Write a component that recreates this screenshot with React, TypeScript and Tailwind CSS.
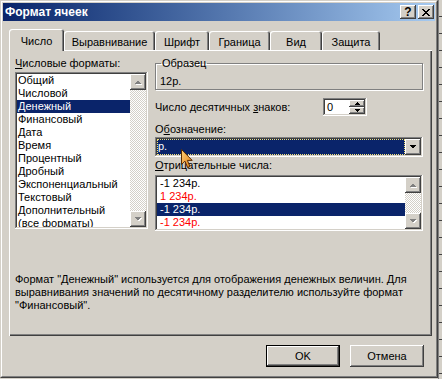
import React from 'react';

const raised =
  'shadow-[inset_-1px_-1px_#404040,inset_1px_1px_#fff,inset_-2px_-2px_#808080,inset_2px_2px_#d4d0c8]';
const sunken =
  'shadow-[inset_-1px_-1px_#fff,inset_1px_1px_#808080,inset_-2px_-2px_#d4d0c8,inset_2px_2px_#404040]';
const checker =
  'bg-[repeating-conic-gradient(#fff_0_25%,#d4d0c8_0_50%)] bg-[length:2px_2px]';

const Arrow: React.FC<{ dir: 'up' | 'down'; disabled?: boolean }> = ({ dir, disabled }) => {
  const pts = dir === 'up' ? '0,4 3.5,0.5 7,4' : '0,0 7,0 3.5,3.5';
  return (
    <svg width="8" height="5" viewBox="0 0 8 5" shapeRendering="crispEdges">
      {disabled && <polygon points={pts} fill="#fff" transform="translate(1,1)" />}
      <polygon points={pts} fill={disabled ? '#808080' : '#000'} />
    </svg>
  );
};

const ScrollBtn: React.FC<{ dir: 'up' | 'down'; disabled?: boolean }> = ({ dir, disabled }) => (
  <div className={`w-[16px] h-[16px] flex items-center justify-center bg-[#d4d0c8] ${raised}`}>
    <Arrow dir={dir} disabled={disabled} />
  </div>
);

const Scrollbar: React.FC = () => (
  <div className="w-[16px] h-full flex flex-col shrink-0">
    <ScrollBtn dir="up" disabled />
    <div className={`flex-1 ${checker}`}></div>
    <ScrollBtn dir="down" disabled />
  </div>
);

const FORMATS = [
  'Общий',
  'Числовой',
  'Денежный',
  'Финансовый',
  'Дата',
  'Время',
  'Процентный',
  'Дробный',
  'Экспоненциальный',
  'Текстовый',
  'Дополнительный',
  '(все форматы)',
];

const NEGATIVES = [
  { text: '-1 234р.', red: false },
  { text: '1 234р.', red: true },
  { text: '-1 234р.', red: false, selected: true },
  { text: '-1 234р.', red: true },
];

const TABS = [
  { label: 'Выравнивание', w: 'w-[91px]' },
  { label: 'Шрифт', w: 'w-[54px]' },
  { label: 'Граница', w: 'w-[61px]' },
  { label: 'Вид', w: 'w-[52px]' },
  { label: 'Защита', w: 'w-[58px]' },
];

const Cursor: React.FC = () => (
  <svg width="13" height="21" viewBox="0 0 13 21" className="absolute left-[26px] top-[12px] z-20">
    <defs>
      <linearGradient id="cur" x1="0" y1="0" x2="1" y2="1">
        <stop offset="0" stopColor="#ffd27a" />
        <stop offset="1" stopColor="#e07a10" />
      </linearGradient>
    </defs>
    <path
      d="M0.5 0.5 L0.5 15.5 L4 12.2 L6.6 18.5 L9 17.5 L6.4 11.4 L11.2 11.4 Z"
      fill="url(#cur)"
      stroke="#5a2c00"
      strokeWidth="1"
      strokeLinejoin="round"
    />
  </svg>
);

export default function App() {
  return (
    <div className="w-[442px] h-[379px] flex bg-[#d4d0c8] font-['Liberation_Sans',Arial,sans-serif] text-[11px] leading-[13px] text-black overflow-hidden">
      <div className="w-[438px] h-[378px] border border-t-[#d4d0c8] border-l-[#d4d0c8] border-r-[#404040] border-b-[#404040] shrink-0">
        <div className="w-full h-full border border-t-white border-l-white border-r-[#808080] border-b-[#808080] p-px flex flex-col">
          {/* Title bar */}
          <div className="h-[18px] bg-gradient-to-r from-[#0a246a] to-[#a6caf0] flex items-center justify-between pl-[2px] pr-[1px]">
            <span className="text-white font-bold text-[12px]">Формат ячеек</span>
            <div className="flex gap-[2px]">
              <div className={`w-[16px] h-[14px] bg-[#d4d0c8] flex items-center justify-center font-bold text-[12px] leading-none ${raised}`}>
                ?
              </div>
              <div className={`w-[16px] h-[14px] bg-[#d4d0c8] flex items-center justify-center ${raised}`}>
                <svg width="8" height="7" viewBox="0 0 8 7" shapeRendering="crispEdges">
                  <path d="M0 0h2v1H0zM6 0h2v1H6zM1 1h2v1H1zM5 1h2v1H5zM2 2h4v1H2zM3 3h2v1H3zM2 4h4v1H2zM1 5h2v1H1zM5 5h2v1H5zM0 6h2v1H0zM6 6h2v1H6z" fill="#000" />
                </svg>
              </div>
            </div>
          </div>

          {/* Tabs */}
          <div className="flex items-end h-[21px] mt-[8px] ml-[6px]">
            <div className="relative z-10 w-[55px] h-[22px] -mb-px bg-[#d4d0c8] rounded-t-[3px] shadow-[inset_1px_1px_#fff,inset_-1px_0_#404040,inset_-2px_0_#808080] flex justify-center pt-[6px]">
              Число
            </div>
            {TABS.map((t) => (
              <div
                key={t.label}
                className={`${t.w} h-[19px] bg-[#d4d0c8] rounded-t-[3px] shadow-[inset_1px_1px_#fff,inset_-1px_0_#404040,inset_-2px_0_#808080] flex justify-center pt-[5px]`}
              >
                {t.label}
              </div>
            ))}
          </div>

          {/* Panel */}
          <div className="ml-[6px] w-[423px] h-[286px] shadow-[inset_1px_1px_#fff,inset_-1px_-1px_#404040,inset_-2px_-2px_#808080] pl-[6px] pt-[7px] flex flex-col">
            <div className="flex gap-[7px]">
              {/* Left column */}
              <div className="w-[133px] flex flex-col">
                <div>
                  <span className="underline">Ч</span>исловые форматы:
                </div>
                <div className={`mt-[2px] h-[157px] bg-white p-[2px] flex ${sunken}`}>
                  <div className="flex-1 overflow-hidden">
                    {FORMATS.map((f) => (
                      <div
                        key={f}
                        className={`h-[13px] pl-px whitespace-nowrap ${f === 'Денежный' ? 'bg-[#0a246a] text-white' : ''}`}
                      >
                        {f}
                      </div>
                    ))}
                  </div>
                  <Scrollbar />
                </div>
              </div>

              {/* Right column */}
              <div className="w-[268px] flex flex-col">
                <fieldset className="border border-[#808080] shadow-[inset_1px_1px_#fff,1px_1px_#fff] pl-[4px] pb-px">
                  <legend className="ml-px px-px">Образец</legend>
                  <div className="pt-[5px]">12р.</div>
                </fieldset>

                <div className="mt-[8px] flex items-center">
                  <div className="w-[168px]">
                    Число десятичных <span className="underline">з</span>наков:
                  </div>
                  <div className={`w-[44px] h-[18px] bg-white p-[2px] flex ${sunken}`}>
                    <div className="flex-1 pl-[2px] leading-[14px]">0</div>
                    <div className="w-[16px] flex flex-col">
                      <div className={`h-[7px] flex items-center justify-center bg-[#d4d0c8] ${raised}`}>
                        <svg width="5" height="3" viewBox="0 0 5 3" shapeRendering="crispEdges">
                          <path d="M2 0h1v1H2zM1 1h3v1H1zM0 2h5v1H0z" fill="#000" />
                        </svg>
                      </div>
                      <div className={`h-[7px] flex items-center justify-center bg-[#d4d0c8] ${raised}`}>
                        <svg width="5" height="3" viewBox="0 0 5 3" shapeRendering="crispEdges">
                          <path d="M0 0h5v1H0zM1 1h3v1H1zM2 2h1v1H2z" fill="#000" />
                        </svg>
                      </div>
                    </div>
                  </div>
                </div>

                <div className="mt-[7px]">
                  О<span className="underline">б</span>означение:
                </div>
                <div className={`relative mt-px h-[20px] bg-white p-[2px] flex ${sunken}`}>
                  <div className="flex-1 bg-[#0a246a] text-white outline-1 outline-dotted outline-[#f5e27a] -outline-offset-1 pl-px leading-[15px]">
                    р.
                  </div>
                  <div className={`w-[16px] flex items-center justify-center bg-[#d4d0c8] ${raised}`}>
                    <Arrow dir="down" />
                  </div>
                  <Cursor />
                </div>

                <div className="mt-[2px]">
                  <span className="underline">О</span>трицательные числа:
                </div>
                <div className={`mt-[3px] h-[56px] bg-white p-[2px] flex ${sunken}`}>
                  <div className="flex-1 overflow-hidden">
                    {NEGATIVES.map((n, i) => (
                      <div
                        key={i}
                        className={`h-[13px] pl-[3px] ${
                          n.selected ? 'bg-[#0a246a] text-white' : n.red ? 'text-[#ff0000]' : ''
                        }`}
                      >
                        {n.text}
                      </div>
                    ))}
                  </div>
                  <Scrollbar />
                </div>
              </div>
            </div>

            <p className="mt-[42px] whitespace-nowrap">
              Формат "Денежный" используется для отображения денежных величин. Для
              <br />
              выравнивания значений по десятичному разделителю используйте формат
              <br />
              "Финансовый".
            </p>
          </div>

          {/* Buttons */}
          <div className="mt-[9px] mr-[11px] flex justify-end gap-[10px]">
            <button className="w-[74px] h-[22px] bg-[#d4d0c8] shadow-[inset_0_0_0_1px_#000,inset_-2px_-2px_#404040,inset_2px_2px_#fff,inset_-3px_-3px_#808080]">
              OK
            </button>
            <button className={`w-[74px] h-[22px] bg-[#d4d0c8] ${raised}`}>Отмена</button>
          </div>
        </div>
      </div>
      <div className="flex-1 h-full border-l border-[#808080] bg-[repeating-linear-gradient(to_bottom,transparent_0_16px,#404040_16px_17px)] bg-[#d4d0c8]"></div>
    </div>
  );
}
